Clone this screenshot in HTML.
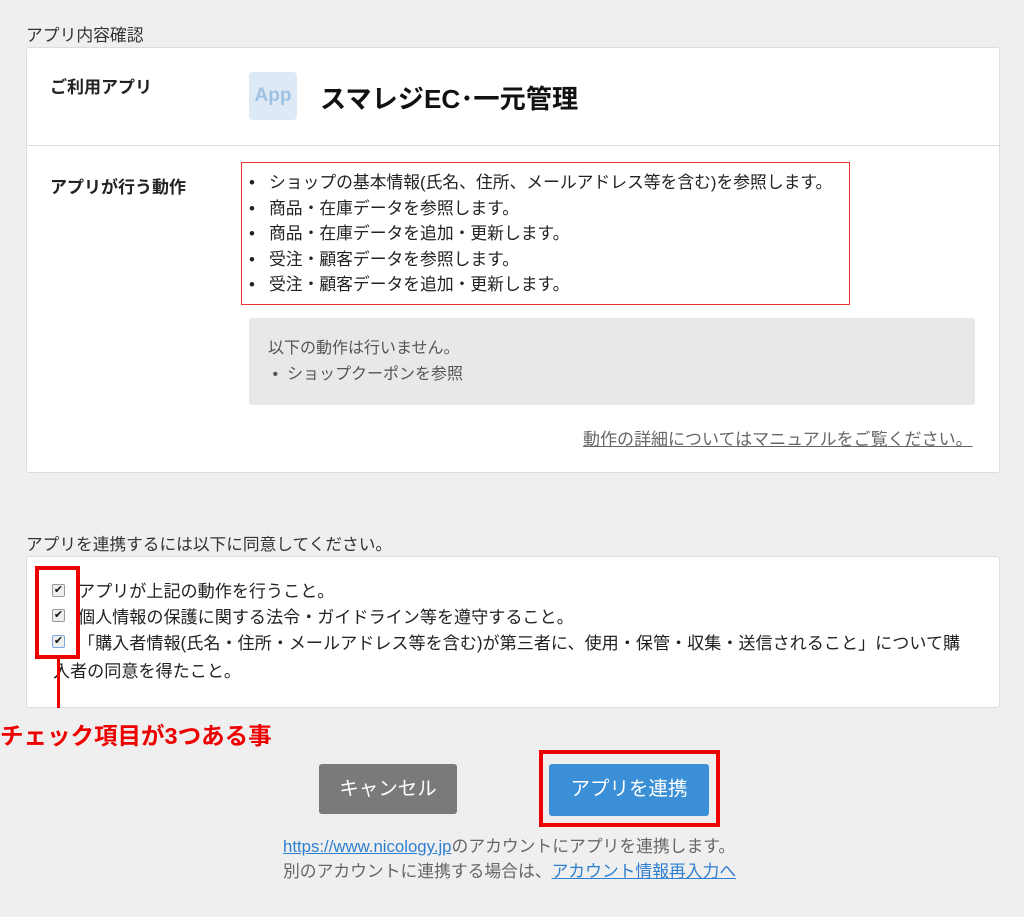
<!DOCTYPE html>
<html><head><meta charset="utf-8"><style>
*{box-sizing:border-box;margin:0;padding:0}
body{width:1024px;height:917px;background:#efefef;font-family:"Liberation Sans","Noto Sans CJK JP",sans-serif;color:#333;position:relative;overflow:hidden;font-size:15px}
.a{position:absolute;white-space:nowrap}
.card{background:#fff;border:1px solid #ddd;border-radius:3px}
.lbl{font-weight:bold;font-size:17px;color:#222}
ul{list-style:none}
li{line-height:25.5px;position:relative;padding-left:28px;font-size:16.8px;color:#222}
li:before{content:"•";position:absolute;left:8px}
.cb{width:13px;height:13px;border:1px solid #999;border-radius:2px;background:#eee;font-size:11px;line-height:11px;text-align:center;color:#111}
</style></head><body>
<div class="a" style="left:26px;top:22px;font-size:16.8px">アプリ内容確認</div>
<div class="a card" style="left:26px;top:47px;width:974px;height:426px"></div>
<div class="a" style="left:27px;top:145px;width:972px;height:1px;background:#ddd"></div>
<div class="a lbl" style="left:50px;top:73px">ご利用アプリ</div>
<div class="a" style="left:249px;top:72px;width:48px;height:48px;background:#dde9f5;border-radius:4px;color:#9fc2e2;font-weight:bold;font-size:19px;line-height:48px;text-align:center">App</div>
<div class="a" style="left:320px;top:78px;font-size:26.2px;font-weight:bold;color:#111">スマレジEC･一元管理</div>
<div class="a lbl" style="left:50px;top:173px">アプリが行う動作</div>
<div class="a" style="left:241px;top:162px;width:609px;height:143px;border:1.5px solid #e33"></div>
<ul class="a" style="left:241px;top:170px">
<li>ショップの基本情報(氏名、住所、メールアドレス等を含む)を参照します。</li>
<li>商品・在庫データを参照します。</li>
<li>商品・在庫データを追加・更新します。</li>
<li>受注・顧客データを参照します。</li>
<li>受注・顧客データを追加・更新します。</li>
</ul>
<div class="a" style="left:249px;top:318px;width:726px;height:87px;background:#e8e8e8;border-radius:3px"></div>
<div class="a" style="left:268px;top:336px;font-size:16px;color:#555;line-height:26px">以下の動作は行いません。<br>&nbsp;•&nbsp; ショップクーポンを参照</div>
<div class="a" style="left:583px;top:425px;font-size:17px;color:#666;text-decoration:underline">動作の詳細についてはマニュアルをご覧ください。</div>
<div class="a" style="left:26px;top:531px;font-size:16.7px">アプリを連携するには以下に同意してください。</div>
<div class="a card" style="left:26px;top:556px;width:974px;height:152px"></div>
<div class="a cb" style="left:52px;top:584px">✔</div>
<div class="a cb" style="left:52px;top:609px">✔</div>
<div class="a cb" style="left:52px;top:635px;border-color:#7aa7e0">✔</div>
<div class="a" style="left:78px;top:579px;font-size:17.1px;line-height:26px;color:#222">アプリが上記の動作を行うこと。<br>個人情報の保護に関する法令・ガイドライン等を遵守すること。<br>「購入者情報(氏名・住所・メールアドレス等を含む)が第三者に、使用・保管・収集・送信されること」について購</div>
<div class="a" style="left:53px;top:657px;font-size:17.1px;color:#222">入者の同意を得たこと。</div>
<div class="a" style="left:35px;top:566px;width:45px;height:93px;border:4px solid #e00"></div>
<div class="a" style="left:57px;top:658px;width:3px;height:50px;background:#e00"></div>
<div class="a" style="left:0;top:717px;font-size:23.5px;font-weight:bold;color:#e00">チェック項目が3つある事</div>
<div class="a" style="left:319px;top:764px;width:138px;height:50px;background:#7a7a7a;border-radius:3px;color:#fff;font-size:19.5px;line-height:50px;text-align:center">キャンセル</div>
<div class="a" style="left:539px;top:750px;width:181px;height:77px;border:4px solid #e00"></div>
<div class="a" style="left:549px;top:764px;width:160px;height:52px;background:#3b8fd6;border-radius:3px;color:#fff;font-size:19.5px;line-height:50px;text-align:center">アプリを連携</div>
<div class="a" style="left:283px;top:834px;font-size:16.8px;color:#666;line-height:25px"><span style="color:#2f7fcf;text-decoration:underline">https://www.nicology.jp</span>のアカウントにアプリを連携します。<br>別のアカウントに連携する場合は、<span style="color:#2f7fcf;text-decoration:underline">アカウント情報再入力へ</span></div>
</body></html>
